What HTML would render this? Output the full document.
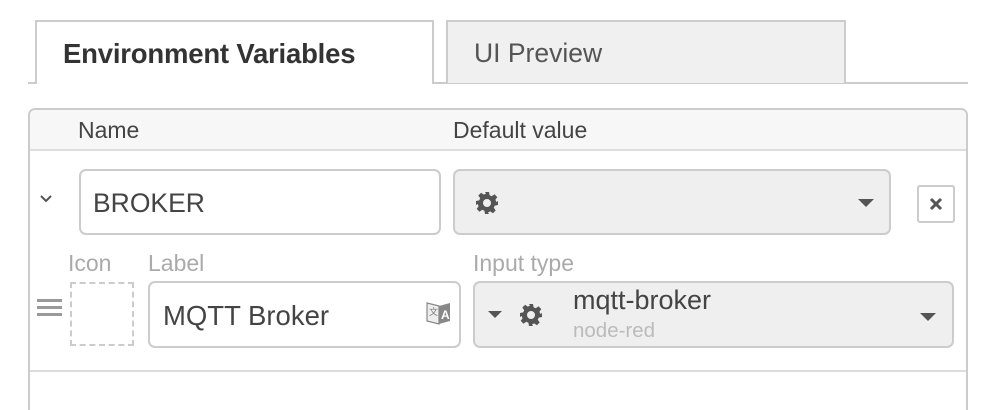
<!DOCTYPE html>
<html style="height:410px;overflow:hidden"><head><style>
body{margin:0;width:988px;height:410px;background:#fff;font-family:"Liberation Sans",sans-serif;position:relative;overflow:hidden;color:#555}
.a{position:absolute;box-sizing:border-box;white-space:nowrap}
</style></head><body>
<div class="a" style="left:28px;top:82px;width:940px;height:2px;background:#ccc"></div>
<div class="a" style="left:35px;top:20px;width:399px;height:64px;border:2px solid #ccc;border-bottom:none;background:#fff;font-weight:bold;font-size:27.5px;color:#333;padding:16px 0 0 26px;letter-spacing:-0.2px">Environment Variables</div>
<div class="a" style="left:446px;top:20px;width:400px;height:63px;border:2px solid #ccc;border-bottom:none;background:#f0f0f0;font-size:26.5px;color:#555;padding:16px 0 0 26px">UI Preview</div>
<div class="a" style="left:28px;top:108px;width:940px;height:302px;border:2px solid #ccc;border-bottom:none;border-radius:7px 7px 0 0;background:#fff"></div>
<div class="a" style="left:30px;top:110px;width:936px;height:41px;background:#f7f7f7;border-bottom:2px solid #ddd;border-radius:5px 5px 0 0"></div>
<div class="a" style="left:78px;top:117px;font-size:23px;color:#444">Name</div>
<div class="a" style="left:453px;top:117px;font-size:23px;color:#444">Default value</div>
<svg class="a" style="left:38px;top:192px" width="16" height="12"><path d="M3 4l5 5 5-5" fill="none" stroke="#555" stroke-width="2"/></svg>
<div class="a" style="left:79px;top:169px;width:362px;height:66px;border:2px solid #ccc;border-radius:7px;font-size:26.5px;color:#444;padding:17px 0 0 12px">BROKER</div>
<div class="a" style="left:453px;top:169px;width:438px;height:66px;border:2px solid #ccc;border-radius:7px;background:#efefef"></div>
<svg class="a" style="left:475px;top:191px" width="24" height="24" viewBox="0 0 24 24"><path fill="#555" d="M10 1h4l.6 3.2 2.2 1 2.7-1.9 2.8 2.8-1.9 2.7 1 2.2L23 10v4l-3.2.6-1 2.2 1.9 2.7-2.8 2.8-2.7-1.9-2.2 1L14 23h-4l-.6-3.2-2.2-1-2.7 1.9-2.8-2.8 1.9-2.7-1-2.2L1 14v-4l3.2-.6 1-2.2-1.9-2.7 2.8-2.8 2.7 1.9 2.2-1zM12 8a4 4 0 100 8 4 4 0 000-8z"/></svg>
<svg class="a" style="left:857px;top:198px" width="18" height="10"><path d="M1 1h16l-8 8z" fill="#555"/></svg>
<div class="a" style="left:917px;top:185px;width:38px;height:38px;border:2px solid #ccc;border-radius:3px"></div>
<svg class="a" style="left:929px;top:197px" width="14" height="14"><path d="M2 2l10 10M12 2L2 12" stroke="#555" stroke-width="3"/></svg>
<div class="a" style="left:68px;top:250px;font-size:23px;color:#aaa">Icon</div>
<div class="a" style="left:148px;top:250px;font-size:23px;color:#aaa">Label</div>
<div class="a" style="left:473px;top:250px;font-size:23px;color:#aaa">Input type</div>
<div class="a" style="left:37px;top:299px;width:25px;height:3px;background:#999;box-shadow:0 7px 0 #999,0 14px 0 #999"></div>
<div class="a" style="left:70px;top:282px;width:64px;height:64px;border:2px dashed #ccc"></div>
<div class="a" style="left:148px;top:281px;width:313px;height:67px;border:2px solid #ccc;border-radius:7px;font-size:27.5px;color:#444;padding:17px 0 0 13px">MQTT Broker</div>
<svg class="a" style="left:426px;top:300px" width="26" height="28" viewBox="0 0 26 28"><path d="M1 3l12 3v18L1 21z" fill="#eee" stroke="#888" stroke-width="1.2"/><path d="M13 6l11-3v18l-11 3z" fill="#888"/><text x="15" y="19" font-size="12" font-weight="bold" fill="#fff" font-family="Liberation Sans">A</text><text x="3" y="15" font-size="9" fill="#777">文</text></svg>
<div class="a" style="left:473px;top:281px;width:481px;height:67px;border:2px solid #ccc;border-radius:7px;background:#efefef"></div>
<svg class="a" style="left:487px;top:310px" width="16" height="9"><path d="M1 1h14l-7 7z" fill="#555"/></svg>
<svg class="a" style="left:519px;top:303px" width="24" height="24" viewBox="0 0 24 24"><path fill="#555" d="M10 1h4l.6 3.2 2.2 1 2.7-1.9 2.8 2.8-1.9 2.7 1 2.2L23 10v4l-3.2.6-1 2.2 1.9 2.7-2.8 2.8-2.7-1.9-2.2 1L14 23h-4l-.6-3.2-2.2-1-2.7 1.9-2.8-2.8 1.9-2.7-1-2.2L1 14v-4l3.2-.6 1-2.2-1.9-2.7 2.8-2.8 2.7 1.9 2.2-1zM12 8a4 4 0 100 8 4 4 0 000-8z"/></svg>
<div class="a" style="left:573px;top:285px;font-size:27px;color:#444">mqtt-broker</div>
<div class="a" style="left:573px;top:319px;font-size:20.5px;color:#bbb">node-red</div>
<svg class="a" style="left:919px;top:312px" width="18" height="10"><path d="M1 1h16l-8 8z" fill="#555"/></svg>
<div class="a" style="left:30px;top:370px;width:936px;height:2px;background:#ddd"></div>
</body></html>
